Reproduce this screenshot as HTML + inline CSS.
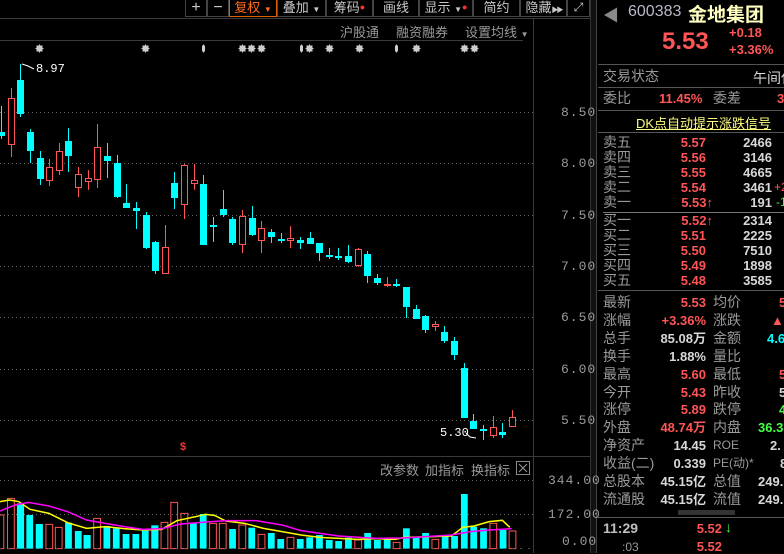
<!DOCTYPE html>
<html><head><meta charset="utf-8"><style>
*{margin:0;padding:0;box-sizing:border-box}
body{width:784px;height:553px;background:#000;overflow:hidden;position:relative;font-family:"Liberation Sans","Noto Sans CJK SC",sans-serif;color:#c0c0c0}
.a{position:absolute;white-space:nowrap}
.tb{position:absolute;top:0;height:17px;border:1px solid #444;border-top:none;font-size:13px;color:#c8c8c8;text-align:center;line-height:15px;white-space:nowrap;overflow:hidden}
.g{color:#9a9a9a;font-size:13px}
.r{color:#ff5555}
.w{color:#d8d8d8}
.lab{position:absolute;left:603px;font-size:14px;color:#9a9a9a;line-height:15px;white-space:nowrap}
.v{position:absolute;font-size:13px;font-weight:bold;line-height:15px;text-align:right;white-space:nowrap}
.ax{position:absolute;left:548px;font-size:13px;color:#9a9a9a;letter-spacing:1px;font-family:"Liberation Mono",monospace}
.hl{position:absolute;height:1px;background:#3a3a3a}
</style></head><body>

<div class="hl" style="left:0;top:18px;width:590px"></div>
<div class="tb" style="left:185px;width:22px;font-size:16px">+</div>
<div class="tb" style="left:207px;width:22px;font-size:16px">−</div>
<div class="tb" style="left:229px;width:48px;border:1px solid #e06000;border-top:none;color:#ff6a1a">复权 <span style="font-size:8px">▼</span></div>
<div class="tb" style="left:277px;width:49px">叠加 <span style="font-size:8px">▼</span></div>
<div class="tb" style="left:326px;width:47px">筹码<span style="color:#f33;font-size:9px;vertical-align:top">●</span></div>
<div class="tb" style="left:373px;width:46px">画线</div>
<div class="tb" style="left:419px;width:54px">显示 <span style="font-size:8px">▼</span><span style="color:#f33;font-size:9px;vertical-align:top">●</span></div>
<div class="tb" style="left:473px;width:47px">简约</div>
<div class="tb" style="left:520px;width:47px">隐藏<span style="font-size:7px;letter-spacing:-2px"> ▶▶</span></div>
<div class="tb" style="left:567px;width:23px;font-size:12px">⤢</div>

<div class="a g" style="left:340px;top:22px">沪股通</div>
<div class="a g" style="left:396px;top:22px">融资融券</div>
<div class="a g" style="left:465px;top:22px">设置均线 <span style="font-size:8px">▼</span></div>
<div class="hl" style="left:0;top:40px;width:523px"></div>
<div style="position:absolute;left:533px;top:18px;width:1px;height:535px;background:#3a3a3a"></div>
<div style="position:absolute;left:590px;top:0;width:7px;height:553px;background:#111;border-left:1px solid #333;border-right:1px solid #444"></div>

<div class="ax" style="left:561px;top:105px">8.50</div>
<div class="ax" style="left:561px;top:156px">8.00</div>
<div class="ax" style="left:561px;top:208px">7.50</div>
<div class="ax" style="left:561px;top:259px">7.00</div>
<div class="ax" style="left:561px;top:310px">6.50</div>
<div class="ax" style="left:561px;top:362px">6.00</div>
<div class="ax" style="left:561px;top:413px">5.50</div>

<svg class="a" style="left:0;top:0" width="590" height="553" shape-rendering="crispEdges">
<defs>
<g id="st"><rect x="-3" y="-3" width="6" height="6" fill="#ccc"/><rect x="-4" y="-0.5" width="8" height="1" fill="#ccc"/><rect x="-0.5" y="-4" width="1" height="8" fill="#ccc"/></g>
<g id="dm"><rect x="-1.5" y="-3" width="3" height="6" fill="#ccc"/><rect x="-0.5" y="-4" width="1" height="8" fill="#ccc"/></g>
</defs>
<use href="#st" x="39.5" y="48.5"/><use href="#st" x="145.5" y="48.5"/><use href="#dm" x="203.5" y="48.5"/>
<use href="#st" x="242.5" y="48.5"/><use href="#st" x="251.5" y="48.5"/><use href="#st" x="261.5" y="48.5"/>
<use href="#dm" x="301.5" y="48.5"/><use href="#st" x="309.5" y="48.5"/><use href="#st" x="329.5" y="48.5"/><use href="#st" x="359.5" y="48.5"/>
<use href="#dm" x="396.5" y="48.5"/><use href="#st" x="416.5" y="48.5"/><use href="#st" x="464.5" y="48.5"/><use href="#st" x="474.5" y="48.5"/>
<g stroke="#666" stroke-dasharray="1,3">
<line x1="0" y1="112.5" x2="533" y2="112.5"/><line x1="0" y1="163.5" x2="533" y2="163.5"/><line x1="0" y1="215.5" x2="533" y2="215.5"/><line x1="0" y1="266.5" x2="533" y2="266.5"/><line x1="0" y1="317.5" x2="533" y2="317.5"/><line x1="0" y1="369.5" x2="533" y2="369.5"/><line x1="0" y1="420.5" x2="533" y2="420.5"/>
<line x1="0" y1="480.5" x2="533" y2="480.5"/><line x1="0" y1="514.5" x2="533" y2="514.5"/>
</g>
<line x1="0" y1="456.5" x2="590" y2="456.5" stroke="#3a3a3a"/>
<g>
<line x1="1.5" y1="106" x2="1.5" y2="139" stroke="#0ff"/><rect x="-2" y="132" width="7" height="4" fill="#0ff"/>
<line x1="11.5" y1="88" x2="11.5" y2="157" stroke="#f55"/><rect x="8.5" y="98.5" width="6" height="46" fill="#000" stroke="#f55"/>
<line x1="20.5" y1="64" x2="20.5" y2="117" stroke="#0ff"/><rect x="17" y="80" width="7" height="34" fill="#0ff"/>
<line x1="30.5" y1="129" x2="30.5" y2="163" stroke="#0ff"/><rect x="27" y="132" width="7" height="19" fill="#0ff"/>
<line x1="40.5" y1="151" x2="40.5" y2="185" stroke="#0ff"/><rect x="37" y="158" width="7" height="21" fill="#0ff"/>
<line x1="49.5" y1="159" x2="49.5" y2="186" stroke="#f55"/><rect x="46.5" y="167.5" width="6" height="13" fill="#000" stroke="#f55"/>
<line x1="59.5" y1="143" x2="59.5" y2="175" stroke="#f55"/><rect x="56.5" y="151.5" width="6" height="19" fill="#000" stroke="#f55"/>
<line x1="68.5" y1="128" x2="68.5" y2="172" stroke="#0ff"/><rect x="65" y="141" width="7" height="15" fill="#0ff"/>
<line x1="78.5" y1="167" x2="78.5" y2="197" stroke="#f55"/><rect x="75.5" y="174.5" width="6" height="13" fill="#000" stroke="#f55"/>
<line x1="88.5" y1="170" x2="88.5" y2="190" stroke="#f55"/><rect x="85.5" y="178.5" width="6" height="3" fill="#000" stroke="#f55"/>
<line x1="97.5" y1="124" x2="97.5" y2="188" stroke="#f55"/><rect x="94.5" y="147.5" width="6" height="32" fill="#000" stroke="#f55"/>
<line x1="107.5" y1="143" x2="107.5" y2="178" stroke="#0ff"/><rect x="104" y="156" width="7" height="5" fill="#0ff"/>
<line x1="117.5" y1="155" x2="117.5" y2="198" stroke="#0ff"/><rect x="114" y="163" width="7" height="34" fill="#0ff"/>
<line x1="126.5" y1="184" x2="126.5" y2="208" stroke="#0ff"/><rect x="123" y="203" width="7" height="5" fill="#0ff"/>
<line x1="136.5" y1="202" x2="136.5" y2="229" stroke="#0ff"/><rect x="133" y="208" width="7" height="3" fill="#0ff"/>
<line x1="146.5" y1="212" x2="146.5" y2="249" stroke="#0ff"/><rect x="143" y="215" width="7" height="33" fill="#0ff"/>
<line x1="155.5" y1="241" x2="155.5" y2="274" stroke="#0ff"/><rect x="152" y="242" width="7" height="29" fill="#0ff"/>
<line x1="165.5" y1="225" x2="165.5" y2="274" stroke="#f55"/><rect x="162.5" y="247.5" width="6" height="26" fill="#000" stroke="#f55"/>
<line x1="174.5" y1="172" x2="174.5" y2="209" stroke="#0ff"/><rect x="171" y="183" width="7" height="15" fill="#0ff"/>
<line x1="184.5" y1="164" x2="184.5" y2="219" stroke="#f55"/><rect x="181.5" y="165.5" width="6" height="39" fill="#000" stroke="#f55"/>
<line x1="194.5" y1="164" x2="194.5" y2="190" stroke="#f55"/><rect x="191.5" y="180.5" width="6" height="3" fill="#000" stroke="#f55"/>
<line x1="203.5" y1="175" x2="203.5" y2="245" stroke="#0ff"/><rect x="200" y="184" width="7" height="61" fill="#0ff"/>
<line x1="213.5" y1="217" x2="213.5" y2="242" stroke="#0ff"/><rect x="210" y="225" width="7" height="2" fill="#0ff"/>
<line x1="223.5" y1="190" x2="223.5" y2="217" stroke="#0ff"/><rect x="220" y="209" width="7" height="6" fill="#0ff"/>
<line x1="232.5" y1="217" x2="232.5" y2="245" stroke="#0ff"/><rect x="229" y="219" width="7" height="24" fill="#0ff"/>
<line x1="242.5" y1="210" x2="242.5" y2="253" stroke="#f55"/><rect x="239.5" y="216.5" width="6" height="28" fill="#000" stroke="#f55"/>
<line x1="252.5" y1="206" x2="252.5" y2="236" stroke="#0ff"/><rect x="249" y="218" width="7" height="17" fill="#0ff"/>
<line x1="261.5" y1="221" x2="261.5" y2="253" stroke="#f55"/><rect x="258.5" y="228.5" width="6" height="12" fill="#000" stroke="#f55"/>
<line x1="271.5" y1="229" x2="271.5" y2="243" stroke="#0ff"/><rect x="268" y="232" width="7" height="5" fill="#0ff"/>
<line x1="281.5" y1="233" x2="281.5" y2="243" stroke="#0ff"/><rect x="278" y="239" width="7" height="2" fill="#0ff"/>
<line x1="290.5" y1="226" x2="290.5" y2="248" stroke="#f55"/><rect x="287.5" y="238.5" width="6" height="2" fill="#000" stroke="#f55"/>
<line x1="300.5" y1="237" x2="300.5" y2="249" stroke="#0ff"/><rect x="297" y="240" width="7" height="3" fill="#0ff"/>
<line x1="310.5" y1="232" x2="310.5" y2="244" stroke="#0ff"/><rect x="307" y="238" width="7" height="6" fill="#0ff"/>
<line x1="319.5" y1="243" x2="319.5" y2="261" stroke="#0ff"/><rect x="316" y="243" width="7" height="10" fill="#0ff"/>
<line x1="329.5" y1="248" x2="329.5" y2="259" stroke="#0ff"/><rect x="326" y="255" width="7" height="2" fill="#0ff"/>
<line x1="338.5" y1="248" x2="338.5" y2="260" stroke="#0ff"/><rect x="335" y="256" width="7" height="2" fill="#0ff"/>
<line x1="348.5" y1="245" x2="348.5" y2="263" stroke="#0ff"/><rect x="345" y="256" width="7" height="6" fill="#0ff"/>
<line x1="358.5" y1="248" x2="358.5" y2="267" stroke="#f55"/><rect x="355.5" y="249.5" width="6" height="16" fill="#000" stroke="#f55"/>
<line x1="367.5" y1="251" x2="367.5" y2="283" stroke="#0ff"/><rect x="364" y="254" width="7" height="22" fill="#0ff"/>
<line x1="377.5" y1="274" x2="377.5" y2="285" stroke="#0ff"/><rect x="374" y="278" width="7" height="5" fill="#0ff"/>
<line x1="387.5" y1="277" x2="387.5" y2="287" stroke="#f55"/><rect x="384" y="284" width="7" height="2" fill="#f55"/>
<line x1="396.5" y1="279" x2="396.5" y2="287" stroke="#0ff"/><rect x="393" y="284" width="7" height="2" fill="#0ff"/>
<line x1="406.5" y1="287" x2="406.5" y2="318" stroke="#0ff"/><rect x="403" y="287" width="7" height="20" fill="#0ff"/>
<line x1="416.5" y1="305" x2="416.5" y2="319" stroke="#0ff"/><rect x="413" y="309" width="7" height="10" fill="#0ff"/>
<line x1="425.5" y1="315" x2="425.5" y2="333" stroke="#0ff"/><rect x="422" y="316" width="7" height="14" fill="#0ff"/>
<line x1="435.5" y1="321" x2="435.5" y2="331" stroke="#f55"/><rect x="432.5" y="324.5" width="6" height="2" fill="#000" stroke="#f55"/>
<line x1="444.5" y1="326" x2="444.5" y2="343" stroke="#0ff"/><rect x="441" y="332" width="7" height="9" fill="#0ff"/>
<line x1="454.5" y1="337" x2="454.5" y2="360" stroke="#0ff"/><rect x="451" y="341" width="7" height="14" fill="#0ff"/>
<line x1="464.5" y1="363" x2="464.5" y2="418" stroke="#0ff"/><rect x="461" y="368" width="7" height="50" fill="#0ff"/>
<line x1="473.5" y1="414" x2="473.5" y2="429" stroke="#0ff"/><rect x="470" y="421" width="7" height="8" fill="#0ff"/>
<line x1="483.5" y1="425" x2="483.5" y2="440" stroke="#0ff"/><rect x="480" y="429" width="7" height="2" fill="#0ff"/>
<line x1="493.5" y1="416" x2="493.5" y2="438" stroke="#f55"/><rect x="490.5" y="427.5" width="6" height="8" fill="#000" stroke="#f55"/>
<line x1="502.5" y1="423" x2="502.5" y2="438" stroke="#0ff"/><rect x="499" y="432" width="7" height="3" fill="#0ff"/>
<line x1="512.5" y1="410" x2="512.5" y2="427" stroke="#f55"/><rect x="509.5" y="417.5" width="6" height="9" fill="#000" stroke="#f55"/>
</g>
<polyline points="22,64 28,66 34,69" fill="none" stroke="#fff" shape-rendering="auto"/>
<polyline points="466,433 470,437 476,438" fill="none" stroke="#fff" shape-rendering="auto"/>
<rect x="516.5" y="461.5" width="13" height="13" fill="none" stroke="#888"/>
<path d="M519 464 L527 472 M527 464 L519 472" stroke="#999" shape-rendering="auto"/>
</svg>
<div class="a" style="left:36px;top:62px;font-size:12px;color:#fff;font-family:'Liberation Mono',monospace">8.97</div>
<div class="a" style="left:440px;top:426px;font-size:12px;color:#fff;font-family:'Liberation Mono',monospace">5.30</div>
<div class="a" style="left:180px;top:441px;font-size:11px;color:#f33;font-weight:bold">$</div>

<div class="a g" style="left:380px;top:460px">改参数</div>
<div class="a g" style="left:425px;top:460px">加指标</div>
<div class="a g" style="left:471px;top:460px">换指标</div>
<div class="ax" style="top:473px">344.00</div>
<div class="ax" style="top:507px">172.00</div>
<div class="ax" style="left:562px;top:534px">0.00</div>

<svg class="a" style="left:0;top:450px" width="590" height="103" viewBox="0 0 1568 309" preserveAspectRatio="none">
<g>
<rect x="-8" y="195" width="18" height="101" fill="none" stroke="#f55" vector-effect="non-scaling-stroke"/>
<rect x="20" y="145" width="18" height="151" fill="none" stroke="#f55" vector-effect="non-scaling-stroke"/>
<rect x="45" y="160" width="19" height="136" fill="#0ff"/>
<rect x="70" y="195" width="18" height="101" fill="#0ff"/>
<rect x="95" y="222" width="19" height="74" fill="#0ff"/>
<rect x="122" y="223" width="18" height="73" fill="none" stroke="#f55" vector-effect="non-scaling-stroke"/>
<rect x="147" y="232" width="18" height="64" fill="none" stroke="#f55" vector-effect="non-scaling-stroke"/>
<rect x="173" y="218" width="18" height="78" fill="#0ff"/>
<rect x="199" y="243" width="18" height="53" fill="#0ff"/>
<rect x="222" y="255" width="19" height="41" fill="#0ff"/>
<rect x="249" y="205" width="18" height="91" fill="none" stroke="#f55" vector-effect="non-scaling-stroke"/>
<rect x="275" y="228" width="18" height="68" fill="#0ff"/>
<rect x="300" y="235" width="18" height="61" fill="#0ff"/>
<rect x="326" y="252" width="18" height="44" fill="#0ff"/>
<rect x="352" y="252" width="18" height="44" fill="#0ff"/>
<rect x="377" y="242" width="18" height="54" fill="#0ff"/>
<rect x="402" y="226" width="19" height="70" fill="#0ff"/>
<rect x="428" y="217" width="18" height="79" fill="none" stroke="#f55" vector-effect="non-scaling-stroke"/>
<rect x="454" y="157" width="18" height="139" fill="none" stroke="#f55" vector-effect="non-scaling-stroke"/>
<rect x="481" y="190" width="18" height="106" fill="none" stroke="#f55" vector-effect="non-scaling-stroke"/>
<rect x="505" y="218" width="18" height="78" fill="#0ff"/>
<rect x="531" y="192" width="18" height="104" fill="#0ff"/>
<rect x="557" y="220" width="18" height="76" fill="none" stroke="#f55" vector-effect="non-scaling-stroke"/>
<rect x="583" y="220" width="18" height="76" fill="none" stroke="#f55" vector-effect="non-scaling-stroke"/>
<rect x="609" y="237" width="18" height="59" fill="#0ff"/>
<rect x="635" y="225" width="18" height="71" fill="none" stroke="#f55" vector-effect="non-scaling-stroke"/>
<rect x="660" y="233" width="18" height="63" fill="#0ff"/>
<rect x="686" y="253" width="18" height="43" fill="none" stroke="#f55" vector-effect="non-scaling-stroke"/>
<rect x="712" y="249" width="18" height="47" fill="#0ff"/>
<rect x="737" y="267" width="18" height="29" fill="#0ff"/>
<rect x="763" y="262" width="18" height="34" fill="none" stroke="#f55" vector-effect="non-scaling-stroke"/>
<rect x="789" y="267" width="18" height="29" fill="#0ff"/>
<rect x="814" y="262" width="18" height="34" fill="#0ff"/>
<rect x="840" y="255" width="18" height="41" fill="#0ff"/>
<rect x="866" y="270" width="18" height="26" fill="#0ff"/>
<rect x="891" y="273" width="18" height="23" fill="#0ff"/>
<rect x="917" y="263" width="18" height="33" fill="#0ff"/>
<rect x="943" y="270" width="18" height="26" fill="none" stroke="#f55" vector-effect="non-scaling-stroke"/>
<rect x="968" y="249" width="18" height="47" fill="#0ff"/>
<rect x="994" y="270" width="18" height="26" fill="#0ff"/>
<rect x="1020" y="266" width="18" height="30" fill="#0ff"/>
<rect x="1045" y="277" width="18" height="19" fill="none" stroke="#f55" vector-effect="non-scaling-stroke"/>
<rect x="1071" y="235" width="18" height="61" fill="#0ff"/>
<rect x="1097" y="263" width="18" height="33" fill="#0ff"/>
<rect x="1122" y="249" width="18" height="47" fill="#0ff"/>
<rect x="1148" y="268" width="18" height="28" fill="none" stroke="#f55" vector-effect="non-scaling-stroke"/>
<rect x="1174" y="255" width="18" height="41" fill="#0ff"/>
<rect x="1199" y="258" width="18" height="38" fill="#0ff"/>
<rect x="1225" y="132" width="18" height="164" fill="#0ff"/>
<rect x="1250" y="230" width="18" height="66" fill="#0ff"/>
<rect x="1276" y="235" width="18" height="61" fill="#0ff"/>
<rect x="1302" y="220" width="18" height="76" fill="none" stroke="#f55" vector-effect="non-scaling-stroke"/>
<rect x="1328" y="240" width="18" height="56" fill="#0ff"/>
<rect x="1353" y="243" width="18" height="53" fill="none" stroke="#f55" vector-effect="non-scaling-stroke"/>
</g>
<polyline fill="none" stroke="#ff0" stroke-width="1.5" vector-effect="non-scaling-stroke" points="0,155 25,150 50,155 80,178 130,190 180,218 230,235 280,230 330,236 380,240 430,238 470,212 520,200 545,193 570,196 600,213 650,220 700,235 750,245 800,255 850,262 900,265 950,268 1000,266 1050,268 1075,262 1150,260 1200,258 1230,232 1260,228 1300,215 1335,211 1355,232"/>
<polyline fill="none" stroke="#f0f" stroke-width="1.5" vector-effect="non-scaling-stroke" points="0,183 40,165 75,157 130,168 180,185 230,210 280,220 330,230 380,238 430,236 480,222 550,216 600,212 680,212 750,225 800,242 900,258 1000,265 1070,264 1100,262 1200,255 1250,245 1300,240 1360,236"/>
<line x1="0" y1="296" x2="1420" y2="296" stroke="#555" stroke-dasharray="2,6" vector-effect="non-scaling-stroke"/>
</svg>

<div class="a" style="left:603px;top:2px;font-size:16px;color:#888">◀</div>
<div class="a" style="left:628px;top:3px;font-size:16px;color:#b8b8c8">600383</div>
<div class="a" style="left:688px;top:0px;font-size:19px;font-weight:bold;color:#ffffc0">金地集团</div>
<div class="a r" style="left:662px;top:28px;font-size:24px;font-weight:bold">5.53</div>
<div class="a r" style="left:729px;top:25px;font-size:13px;font-weight:bold">+0.18</div>
<div class="a r" style="left:729px;top:42px;font-size:13px;font-weight:bold">+3.36%</div>
<div class="hl" style="left:598px;top:64px;width:186px;background:#555"></div>
<div class="lab" style="top:69px">交易状态</div>
<div class="a w" style="left:753px;top:68px;font-size:14px">午间休</div>
<div class="hl" style="left:598px;top:87px;width:186px;background:#555"></div>
<div class="lab" style="top:91px">委比</div>
<div class="a r" style="left:659px;top:91px;font-size:13px;font-weight:bold">11.45%</div>
<div class="lab" style="left:713px;top:91px">委差</div>
<div class="a r" style="left:777px;top:91px;font-size:13px;font-weight:bold">3</div>
<div class="hl" style="left:598px;top:110px;width:186px;background:#555"></div>
<div class="a" style="left:636px;top:113px;font-size:13px;color:#ffff80;text-decoration:underline">DK点自动提示涨跌信号</div>
<div class="hl" style="left:598px;top:132px;width:186px;background:#555"></div>

<div class="lab" style="top:135px">卖五</div><div class="v r" style="left:660px;top:135px;width:46px">5.57</div><div class="v w" style="left:730px;top:135px;width:42px">2466</div>
<div class="lab" style="top:150px">卖四</div><div class="v r" style="left:660px;top:150px;width:46px">5.56</div><div class="v w" style="left:730px;top:150px;width:42px">3146</div>
<div class="lab" style="top:165px">卖三</div><div class="v r" style="left:660px;top:165px;width:46px">5.55</div><div class="v w" style="left:730px;top:165px;width:42px">4665</div>
<div class="lab" style="top:180px">卖二</div><div class="v r" style="left:660px;top:180px;width:46px">5.54</div><div class="v w" style="left:730px;top:180px;width:42px">3461</div><div class="a r" style="left:774px;top:180px;font-size:12px">+2</div>
<div class="lab" style="top:195px">卖一</div><div class="v r" style="left:660px;top:195px;width:53px">5.53↑</div><div class="v w" style="left:730px;top:195px;width:42px">191</div><div class="a" style="left:776px;top:195px;font-size:12px;color:#4f4">-1</div>
<div class="hl" style="left:603px;top:212px;width:181px;background:#777"></div>
<div class="lab" style="top:213px">买一</div><div class="v r" style="left:660px;top:213px;width:53px">5.52↑</div><div class="v w" style="left:730px;top:213px;width:42px">2314</div>
<div class="lab" style="top:228px">买二</div><div class="v r" style="left:660px;top:228px;width:46px">5.51</div><div class="v w" style="left:730px;top:228px;width:42px">2225</div>
<div class="lab" style="top:243px">买三</div><div class="v r" style="left:660px;top:243px;width:46px">5.50</div><div class="v w" style="left:730px;top:243px;width:42px">7510</div>
<div class="lab" style="top:258px">买四</div><div class="v r" style="left:660px;top:258px;width:46px">5.49</div><div class="v w" style="left:730px;top:258px;width:42px">1898</div>
<div class="lab" style="top:273px">买五</div><div class="v r" style="left:660px;top:273px;width:46px">5.48</div><div class="v w" style="left:730px;top:273px;width:42px">3585</div>
<div class="hl" style="left:598px;top:290px;width:186px;background:#555"></div>

<div class="lab" style="top:295px">最新</div><div class="v r" style="left:640px;top:295px;width:66px">5.53</div><div class="lab" style="left:713px;top:295px">均价</div><div class="a r" style="left:779px;top:295px;font-size:13px;font-weight:bold">5</div>
<div class="lab" style="top:313px">涨幅</div><div class="v r" style="left:640px;top:313px;width:66px">+3.36%</div><div class="lab" style="left:713px;top:313px">涨跌</div><div class="a r" style="left:771px;top:313px;font-size:13px;font-weight:bold">▲0</div>
<div class="lab" style="top:331px">总手</div><div class="v w" style="left:640px;top:331px;width:66px">85.08万</div><div class="lab" style="left:713px;top:331px">金额</div><div class="a" style="left:767px;top:331px;font-size:13px;font-weight:bold;color:#0ff">4.6</div>
<div class="lab" style="top:349px">换手</div><div class="v w" style="left:640px;top:349px;width:66px">1.88%</div><div class="lab" style="left:713px;top:349px">量比</div>
<div class="lab" style="top:367px">最高</div><div class="v r" style="left:640px;top:367px;width:66px">5.60</div><div class="lab" style="left:713px;top:367px">最低</div><div class="a r" style="left:779px;top:367px;font-size:13px;font-weight:bold">5</div>
<div class="lab" style="top:385px">今开</div><div class="v r" style="left:640px;top:385px;width:66px">5.43</div><div class="lab" style="left:713px;top:385px">昨收</div><div class="a w" style="left:779px;top:385px;font-size:13px;font-weight:bold">5</div>
<div class="lab" style="top:402px">涨停</div><div class="v r" style="left:640px;top:402px;width:66px">5.89</div><div class="lab" style="left:713px;top:402px">跌停</div><div class="a" style="left:779px;top:402px;font-size:13px;font-weight:bold;color:#4f4">4</div>
<div class="lab" style="top:420px">外盘</div><div class="v r" style="left:640px;top:420px;width:66px">48.74万</div><div class="lab" style="left:713px;top:420px">内盘</div><div class="a" style="left:758px;top:420px;font-size:13px;font-weight:bold;color:#4f4">36.3</div>
<div class="lab" style="top:438px">净资产</div><div class="v w" style="left:640px;top:438px;width:66px">14.45</div><div class="lab" style="left:713px;top:438px;font-size:12px">ROE</div><div class="a w" style="left:770px;top:438px;font-size:13px;font-weight:bold">2.</div>
<div class="lab" style="top:456px">收益(二)</div><div class="v w" style="left:640px;top:456px;width:66px">0.339</div><div class="lab" style="left:713px;top:456px;font-size:12px">PE(动)*</div><div class="a w" style="left:780px;top:456px;font-size:13px;font-weight:bold">8</div>
<div class="lab" style="top:474px">总股本</div><div class="v w" style="left:640px;top:474px;width:66px">45.15亿</div><div class="lab" style="left:713px;top:474px">总值</div><div class="a w" style="left:758px;top:474px;font-size:13px;font-weight:bold">249.</div>
<div class="lab" style="top:492px">流通股</div><div class="v w" style="left:640px;top:492px;width:66px">45.15亿</div><div class="lab" style="left:713px;top:492px">流值</div><div class="a w" style="left:758px;top:492px;font-size:13px;font-weight:bold">249.</div>
<div style="position:absolute;left:678px;top:510px;width:57px;height:5px;background:#333"></div>
<div class="hl" style="left:598px;top:517px;width:186px;background:#555"></div>
<div class="a" style="left:603px;top:520px;font-size:14px;color:#c0c0c0;font-weight:bold">11:29</div>
<div class="v r" style="left:680px;top:521px;width:42px">5.52</div><div class="a" style="left:725px;top:519px;font-size:14px;color:#4f4;font-weight:bold">↓</div>
<div class="a" style="left:622px;top:540px;font-size:12px;color:#999">:03</div>
<div class="v r" style="left:680px;top:539px;width:42px">5.52</div>
</body></html>
